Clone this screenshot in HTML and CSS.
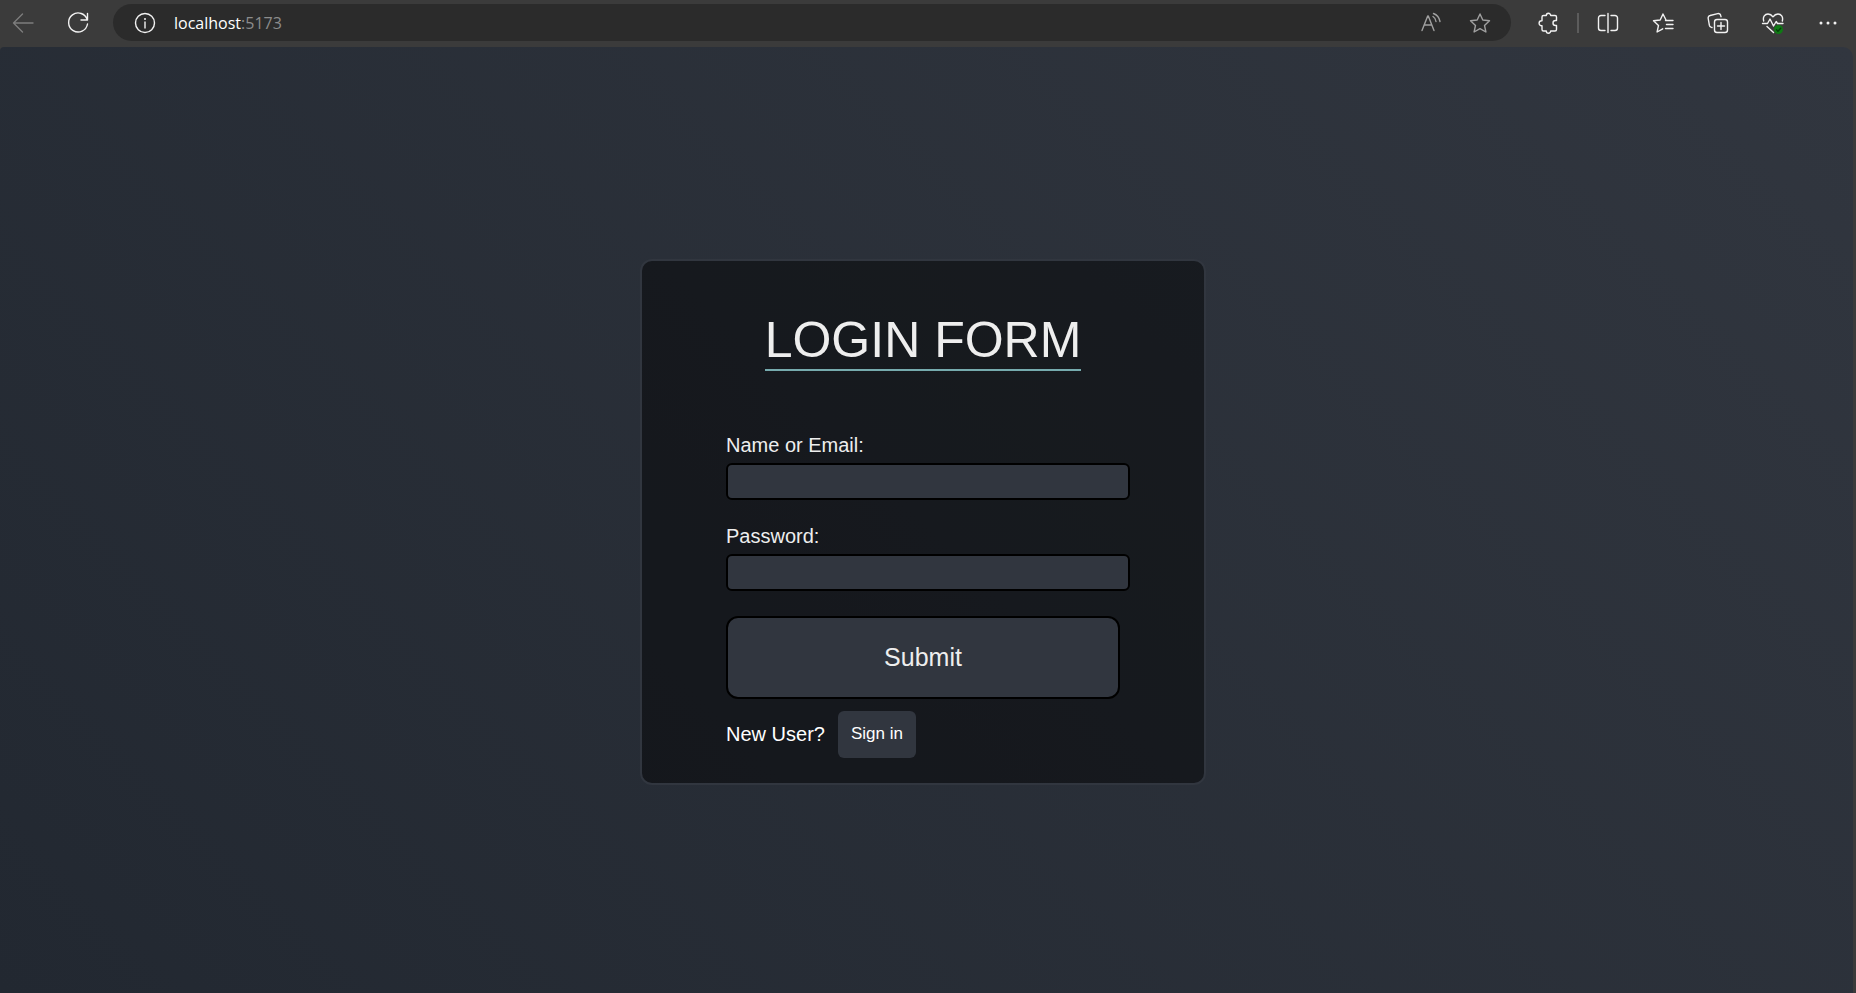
FILE: index.html
```html
<!DOCTYPE html>
<html lang="en">
<head>
<meta charset="utf-8">
<title>Login</title>
<link rel="stylesheet" href="styles.css">
</head>
<body>
<header class="toolbar">
  <nav class="nav-tools" aria-label="Navigation">
    <button class="tool dim" type="button" aria-label="Back"><svg viewBox="0 0 24 24"><path d="M22 12H2.500M11.500 3 2.500 12l9 9"/></svg></button>
    <button class="tool" type="button" aria-label="Refresh"><svg viewBox="0 0 24 24"><path d="M21.300 9A9.500 9.500 0 1 0 21.500 13M21.500 2.500V9H15"/></svg></button>
  </nav>
  <div class="address">
    <button class="tool" type="button" aria-label="Site information"><svg viewBox="0 0 24 24"><circle cx="12" cy="12" r="9.500"/><path d="M12 11v6"/><circle class="solid" cx="12" cy="8" r="1"/></svg></button>
    <span class="url">localhost<span class="port">:5173</span></span>
    <button class="tool muted" type="button" aria-label="Read aloud"><svg viewBox="0 0 24 24"><path d="M3 19.500 8.700 5h.6L15 19.500M5.200 14h7.600M14 5.500c1.700 1 2.700 2.800 3 5M14.500 2.500c3.500 1.300 5.800 4.200 6.500 8"/></svg></button>
    <button class="tool muted" type="button" aria-label="Add to favorites"><svg viewBox="0 0 24 24"><path d="m12 3 2.800 6 6.700.8-5 4.600 1.400 6.600-5.900-3.300L6.100 21l1.400-6.600-5-4.600 6.700-.8z"/></svg></button>
  </div>
  <div class="side-tools">
    <button class="tool" type="button" aria-label="Extensions"><svg viewBox="0 0 24 24"><path d="M7.500 4.500h2.800a2.200 2.200 0 0 1 4.400 0h4.300a1.500 1.500 0 0 1 1.500 1.500v3.500h-1a2.500 2.500 0 0 0 0 5h1V18.500a1.500 1.500 0 0 1-1.500 1.500h-4.300a2.200 2.200 0 0 1-4.400 0H7.500A1.500 1.500 0 0 1 6 18.500v-3.800h-.4a2.500 2.500 0 0 1 0-5H6V6a1.500 1.500 0 0 1 1.500-1.500z"/></svg></button>
    <span class="divider"></span>
    <button class="tool" type="button" aria-label="Split screen"><svg viewBox="0 0 24 24"><path d="M9 4.500H5a2.500 2.500 0 0 0-2.500 2.500v10a2.500 2.500 0 0 0 2.500 2.500h4M15 4.500h4a2.500 2.500 0 0 1 2.500 2.500v10a2.500 2.500 0 0 1-2.500 2.500h-4M12 2.500v19"/></svg></button>
    <button class="tool" type="button" aria-label="Favorites"><svg viewBox="0 0 24 24"><path d="M15 9 12 3 9.200 9l-6.700.8 5 4.600L6.100 21l5.600-3.200M14.500 9.500H22M15.500 13.500H22M14.500 17.500H22"/></svg></button>
    <button class="tool" type="button" aria-label="Collections"><svg viewBox="0 0 24 24"><rect x="8.500" y="8.500" width="13" height="13" rx="2.500"/><path d="M15 11.500v7M11.500 15h7M6 16.500l-1-.3a2.500 2.500 0 0 1-1.600-1.800L2.200 7.500a2.500 2.500 0 0 1 1.900-3l7.600-1.900a2.500 2.500 0 0 1 3 1.900l.3 1.200"/></svg></button>
    <button class="tool" type="button" aria-label="Browser essentials"><svg viewBox="0 0 24 24"><path d="M2.700 10C1.500 5.500 4 3 7 3c2.200 0 3.700 1 5 2.800C13.300 4 14.800 3 17 3c3 0 5.500 2.500 4.300 7M1.500 12.500h5l2.500-4.500 3.500 7 2.700-4.500 1.300 2h5.500M6 15.500l6.500 6"/><circle class="badge" cx="17.500" cy="18.500" r="4.500"/><path class="tick" d="m15.500 18.800 1.400 1.400 2.800-3"/></svg></button>
    <button class="tool" type="button" aria-label="Settings and more"><svg viewBox="0 0 24 24"><circle class="solid" cx="5" cy="12" r="1.500"/><circle class="solid" cx="12" cy="12" r="1.500"/><circle class="solid" cx="19" cy="12" r="1.500"/></svg></button>
  </div>
</header>
<main class="page">
  <form class="card">
    <h1 class="title">LOGIN FORM</h1>
    <div class="field">
      <label for="name">Name or Email:</label>
      <input id="name" type="text">
    </div>
    <div class="field">
      <label for="password">Password:</label>
      <input id="password" type="password">
    </div>
    <button class="submit" type="submit">Submit</button>
    <div class="signup">
      <span>New User?</span>
      <button class="signin" type="button">Sign in</button>
    </div>
  </form>
</main>
</body>
</html>
```
FILE: styles.css
```css
* {
  box-sizing: border-box;
}

body {
  margin: 0;
  min-height: 100vh;
  display: flex;
  flex-direction: column;
  background: #3b3b3b;
  color: #eeeeee;
  font-family: "Liberation Sans", Arial, sans-serif;
}

button {
  font-family: inherit;
  color: inherit;
  cursor: pointer;
}

.toolbar {
  display: flex;
  align-items: center;
  height: 47px;
  padding: 0 16px 2px 11px;
}

.nav-tools {
  display: flex;
  gap: 31px;
  margin-right: 23px;
}

.tool {
  flex: none;
  width: 24px;
  height: 24px;
  padding: 0;
  border: 0;
  background: none;
  color: #f2f2f2;
}

.tool.dim {
  color: #7d7d7d;
}

.tool.muted {
  color: #a0a0a0;
}

.tool svg {
  display: block;
  width: 24px;
  height: 24px;
  fill: none;
  stroke: currentColor;
  stroke-width: 1.4;
  stroke-linecap: round;
  stroke-linejoin: round;
}

.tool .solid {
  fill: currentColor;
  stroke: none;
}

.tool .badge {
  fill: #0f7a14;
  stroke: none;
}

.tool .tick {
  stroke: #063f0a;
}

.address {
  flex: 1;
  display: flex;
  align-items: center;
  gap: 25px;
  height: 37px;
  padding: 0 19px 0 20px;
  border-radius: 19px;
  background: #2b2b2b;
}

.url {
  flex: 1;
  margin-left: -8px;
  font: 16px/24px "Open Sans", "Noto Sans", sans-serif;
  color: #ffffff;
}

.port {
  color: #8c8c8c;
}

.side-tools {
  display: flex;
  align-items: center;
  gap: 31px;
  margin-left: 25px;
}

.divider {
  width: 2px;
  height: 20px;
  margin: 0 -14px;
  background: #5c5c5c;
}

.page {
  flex: 1;
  display: flex;
  align-items: center;
  justify-content: center;
  margin-right: 3px;
  padding: 4px 7px 0 0;
  border-radius: 4px 10px 0 0;
  background: linear-gradient(45deg, #222831, #31363f);
}

.card {
  width: 566px;
  padding: 50px 84px 25px;
  border: 2px solid #31363f;
  border-radius: 12px;
  background: rgba(0, 0, 0, 0.46);
}

.title {
  width: fit-content;
  margin: 0 auto 63px;
  border-bottom: 2px solid #76abae;
  font-size: 50px;
  font-weight: 400;
  line-height: 58px;
}

.field {
  display: flex;
  flex-direction: column;
  gap: 6px;
  margin-bottom: 25px;
  font-size: 20px;
  line-height: 23px;
}

.field input {
  width: 404px;
  height: 37px;
  padding: 5px;
  border: 2px solid #000000;
  border-radius: 6px;
  background: #31363f;
  color: inherit;
  font: inherit;
}

.submit {
  display: block;
  width: 100%;
  height: 83px;
  border: 2px solid #000000;
  border-radius: 12px;
  background: #31363f;
  font-size: 25px;
}

.signup {
  display: flex;
  align-items: center;
  gap: 13px;
  margin-top: 12px;
  font-size: 20px;
  color: #ffffff;
}

.signin {
  height: 47px;
  padding: 0 13px 2px;
  border: 0;
  border-radius: 6px;
  background: #31363f;
  font-size: 17px;
}
```
